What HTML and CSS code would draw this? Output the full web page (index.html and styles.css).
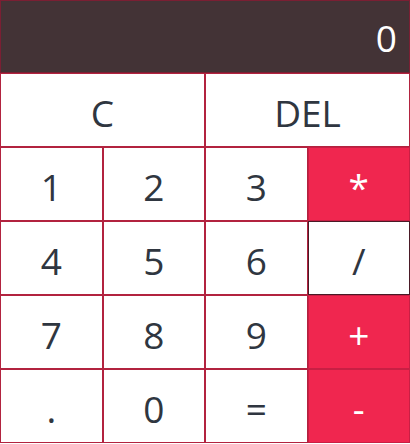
FILE: index.html
```html
<!DOCTYPE html>
<html>
<head>
<meta charset="utf-8">
<link rel="stylesheet" href="styles.css">
</head>
<body>
<div class="calc">
  <div class="display">0</div>
  <div class="keys">
    <button class="key wide">C</button>
    <button class="key wide">DEL</button>
    <button class="key">1</button>
    <button class="key">2</button>
    <button class="key">3</button>
    <button class="key op">*</button>
    <button class="key">4</button>
    <button class="key">5</button>
    <button class="key">6</button>
    <button class="key div">/</button>
    <button class="key">7</button>
    <button class="key">8</button>
    <button class="key">9</button>
    <button class="key op">+</button>
    <button class="key">.</button>
    <button class="key">0</button>
    <button class="key">=</button>
    <button class="key op">-</button>
  </div>
</div>
</body>
</html>
```
FILE: styles.css
```css
* { box-sizing: border-box; }
html, body { margin: 0; padding: 0; background: #fff; }
.calc {
  width: 410px;
  font-family: "Open Sans", "Segoe UI", sans-serif;
}
.display {
  height: 73px;
  background: #433336;
  border: 1px solid #7a1f33;
  color: #fff;
  font-size: 37px;
  text-align: right;
  padding: 12px 12px 0 0;
  line-height: 50px;
}
.keys {
  display: grid;
  grid-template-columns: repeat(4, 1fr);
}
.key {
  height: 74px;
  margin: 0;
  border: 1px solid #b2233f;
  background: #fff;
  color: #2f3640;
  font-family: inherit;
  font-size: 37px;
  padding: 4px 0 0 0;
  line-height: 1;
}
.wide { grid-column: span 2; }
.op {
  background: #f0264f;
  color: #fff;
  border-color: #c81f44;
}
.div {
  border-color: #4a1a26;
}
```
